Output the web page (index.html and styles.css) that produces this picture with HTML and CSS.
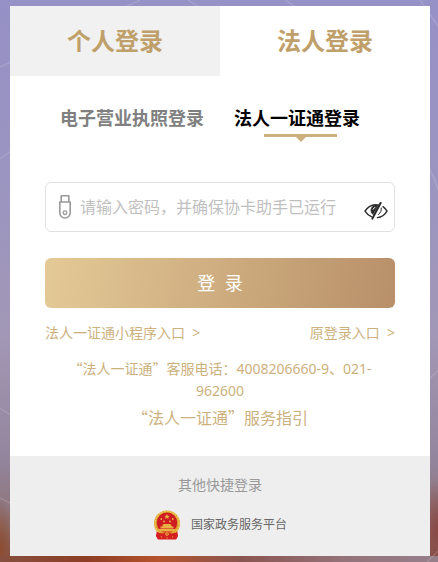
FILE: index.html
```html
<!DOCTYPE html>
<html lang="zh-CN">
<head>
<meta charset="utf-8">
<meta name="viewport" content="width=device-width, initial-scale=1">
<title>法人登录</title>
<link rel="stylesheet" href="styles.css">
</head>
<body>
<svg class="backdrop" viewBox="0 0 438 562" preserveAspectRatio="none" aria-hidden="true">
  <g fill="none" stroke="#fff" stroke-opacity=".14" stroke-width="1.5">
    <path d="M0 67L140 0M188 0l12 8M285 0l12 8M420 0l18 26M0 159l12-9M0 408l12 8M0 498l12 6M428 166q6 10 10 24M427 562l11-11M428 380l10-9"/>
  </g>
</svg>
<main class="card">
  <nav class="tabs">
    <button class="tab" type="button">个人登录</button>
    <button class="tab tab-active" type="button">法人登录</button>
  </nav>
  <form class="panel">
    <div class="methods">
      <button class="method" type="button">电子营业执照登录</button>
      <button class="method method-active" type="button">法人一证通登录</button>
    </div>
    <div class="field">
      <label for="password" aria-label="密码">
        <svg class="key-icon" viewBox="0 0 14 26" fill="none" stroke="#999" stroke-width="1.6">
          <path d="M3.2 8V1.8h7.6V8M1.8 8h10.4v10.8a5.2 5.2 0 0 1-10.4 0z" stroke-linejoin="round"/>
          <circle cx="7" cy="18.7" r="1.8" stroke-width="1.3"/>
        </svg>
      </label>
      <input id="password" type="password" placeholder="请输入密码，并确保协卡助手已运行">
      <button class="reveal" type="button" aria-label="显示密码">
        <svg class="eye-icon" viewBox="0 0 24 18" fill="none" stroke="#2b2b2b" stroke-width="1.4" stroke-linecap="round">
          <path d="M7.800 14.800C5 13.800 2.600 11.800 1 9.200 4.400 4 9.800 1.800 15 3.200"/>
          <path d="M19 4.600c1.600 1.100 3 2.600 4 4.500-2.200 3.800-5.700 6.200-9.600 6.500"/>
          <path d="M14 3.600C10.200 2.400 7 5 7 8.400c0 1.700.7 3.100 2 4.100z" fill="#2b2b2b" stroke-width=".8"/>
          <path d="M9 7.200q.4-1.400 1.900-1.700" stroke="#fff" stroke-width="1"/>
          <path d="M16.600 1L8.400 16.600" stroke-width="2"/>
          <path d="M17.400 6q.8 3.400-2.800 6.600" stroke-width="1"/>
        </svg>
      </button>
    </div>
    <button class="submit" type="submit">登&nbsp;&nbsp;录</button>
    <div class="entries">
      <a href="#">法人一证通小程序入口&nbsp; &gt;</a>
      <a href="#">原登录入口&nbsp; &gt;</a>
    </div>
    <p class="hotline"><span class="quote">“</span>法人一证通<span class="quote">”</span>客服电话：4008206660-9、021-<wbr>962600</p>
    <a class="guide" href="#"><span class="quote">“</span>法人一证通<span class="quote">”</span>服务指引</a>
  </form>
  <footer class="other">
    <h2>其他快捷登录</h2>
    <a class="platform" href="#">
      <svg class="emblem" viewBox="0 0 28 30" aria-hidden="true">
        <path d="M4 20h20l1 6-2 3-4-1-5 1-5-1-4 1-2-3z" fill="#c81e20"/>
        <circle cx="14" cy="13.500" r="13" fill="#d99a2b"/>
        <circle cx="14" cy="13.500" r="12" fill="none" stroke="#f2cb59" stroke-width="1.400" stroke-dasharray="2 .8"/>
        <circle cx="14" cy="12.800" r="10.200" fill="#cf1b22"/>
        <path d="M14 4l.8 1.800 2 .1-1.600 1.300.6 1.900L14 8l-1.800 1.100.6-1.900-1.600-1.300 2-.1z" fill="#e9b043"/>
        <g fill="#e9b043"><circle cx="8.300" cy="9" r=".9"/><circle cx="11" cy="11.500" r=".9"/><circle cx="17" cy="11.500" r=".9"/><circle cx="19.700" cy="9" r=".9"/>
        <path d="M9.500 15l1.500-1h6l1.500 1v1.500h2V18.500H7.500v-2h2zM5 19h18l-2 2.500H7z"/></g>
        <path d="M4 22q5 2.500 8 .8h4q3 1.700 8-.8l.5 5-1.500 2.500H5L3.500 27z" fill="#d6201f"/>
        <circle cx="14" cy="24" r="1.800" fill="#efbd43"/><circle cx="14" cy="24" r=".8" fill="#c81e20"/>
        <path d="M8 26l1 2M20 26l-1 2M14 27v2" stroke="#e07a2c"/>
      </svg>
      <span>国家政务服务平台</span>
    </a>
  </footer>
</main>
</body>
</html>
```
FILE: styles.css
```css
* {
  box-sizing: border-box;
}

body {
  margin: 0;
  min-height: 100vh;
  padding: 6px 8px 6px 10px;
  font-family: "Noto Sans", "Noto Sans CJK SC", sans-serif;
  font-size: 14px;
  line-height: 22px;
  color: #ccb17e;
  background:
    linear-gradient(90deg, #86503f, #8e3d24 20%, #b5532b 36%, #8a5550 55%, #94747c 80%, #967f8a) bottom / 100% 6px no-repeat,
    radial-gradient(ellipse 16px 50px at 0 550px, #8d4c30, transparent),
    radial-gradient(ellipse 24px 50px at 100% 530px, #8a4844, transparent),
    linear-gradient(#9691c6, #9b95c0 35%, #a297b5 60%, #93859c 82%, #8d6f70 94%, #855044);
}

button,
input {
  margin: 0;
  padding: 0;
  border: 0;
  background: none;
  font: inherit;
  color: inherit;
}

button {
  cursor: pointer;
}

a {
  color: inherit;
  text-decoration: none;
}

svg {
  display: block;
}

.backdrop {
  position: absolute;
  inset: 0;
  width: 100%;
  height: 100%;
}

.card {
  position: relative;
  background: #fff;
}

.tabs {
  display: grid;
  grid-template-columns: 1fr 1fr;
}

.tab {
  padding: 18px 0;
  font-size: 24px;
  line-height: 34px;
  font-weight: 700;
  color: #bfa06a;
  background: #f1f1f1;
}

.tab-active {
  background: #fff;
}

.panel {
  display: flex;
  flex-direction: column;
  padding: 30px 35px 26px;
}

.methods {
  display: flex;
  gap: 30px;
  padding-left: 15px;
}

.method {
  position: relative;
  font-size: 18px;
  line-height: 24px;
  font-weight: 700;
  color: #808080;
  white-space: nowrap;
}

.method-active {
  color: #000;
}

.method-active::before {
  content: "";
  position: absolute;
  top: 28px;
  left: 30px;
  width: 73px;
  height: 3px;
  background: #ccb17e;
}

.method-active::after {
  content: "";
  position: absolute;
  top: 31px;
  left: 62px;
  border: 5px solid transparent;
  border-top-color: #ccb17e;
  border-bottom: 0;
}

.field {
  display: flex;
  align-items: center;
  height: 50px;
  margin-top: 52px;
  padding: 0 6px 0 12px;
  border: 1px solid #e2e2e2;
  border-radius: 6px;
}

.key-icon {
  width: 14px;
  height: 26px;
}

.field input {
  flex: 1;
  min-width: 0;
  height: 48px;
  padding-left: 8px;
  font-size: 16px;
  color: #333;
  outline: 0;
}

.field input::placeholder {
  color: #bfbfbf;
  opacity: 1;
}

.reveal {
  padding-top: 8px;
}

.eye-icon {
  width: 24px;
  height: 18px;
}

.submit {
  height: 50px;
  margin-top: 26px;
  border-radius: 6px;
  font-size: 18px;
  color: #fff;
  background: linear-gradient(100deg, #e4ca96, #b88f69);
}

.entries {
  display: flex;
  justify-content: space-between;
  margin-top: 14px;
}

.hotline {
  margin: 13px 0 0;
  text-align: center;
}

.quote {
  font-family: "Noto Sans CJK SC", sans-serif;
}

.guide {
  align-self: center;
  margin-top: 3px;
  font-size: 16px;
  line-height: 24px;
}

.other {
  display: flex;
  flex-direction: column;
  align-items: center;
  gap: 14px;
  padding: 18px 0 16px;
  background: #eee;
}

.other h2 {
  margin: 0;
  font-size: 14px;
  font-weight: 400;
  color: #999;
}

.platform {
  display: flex;
  align-items: center;
  gap: 10px;
  font-size: 12px;
  color: #666;
}

.emblem {
  width: 28px;
  height: 30px;
}
```
